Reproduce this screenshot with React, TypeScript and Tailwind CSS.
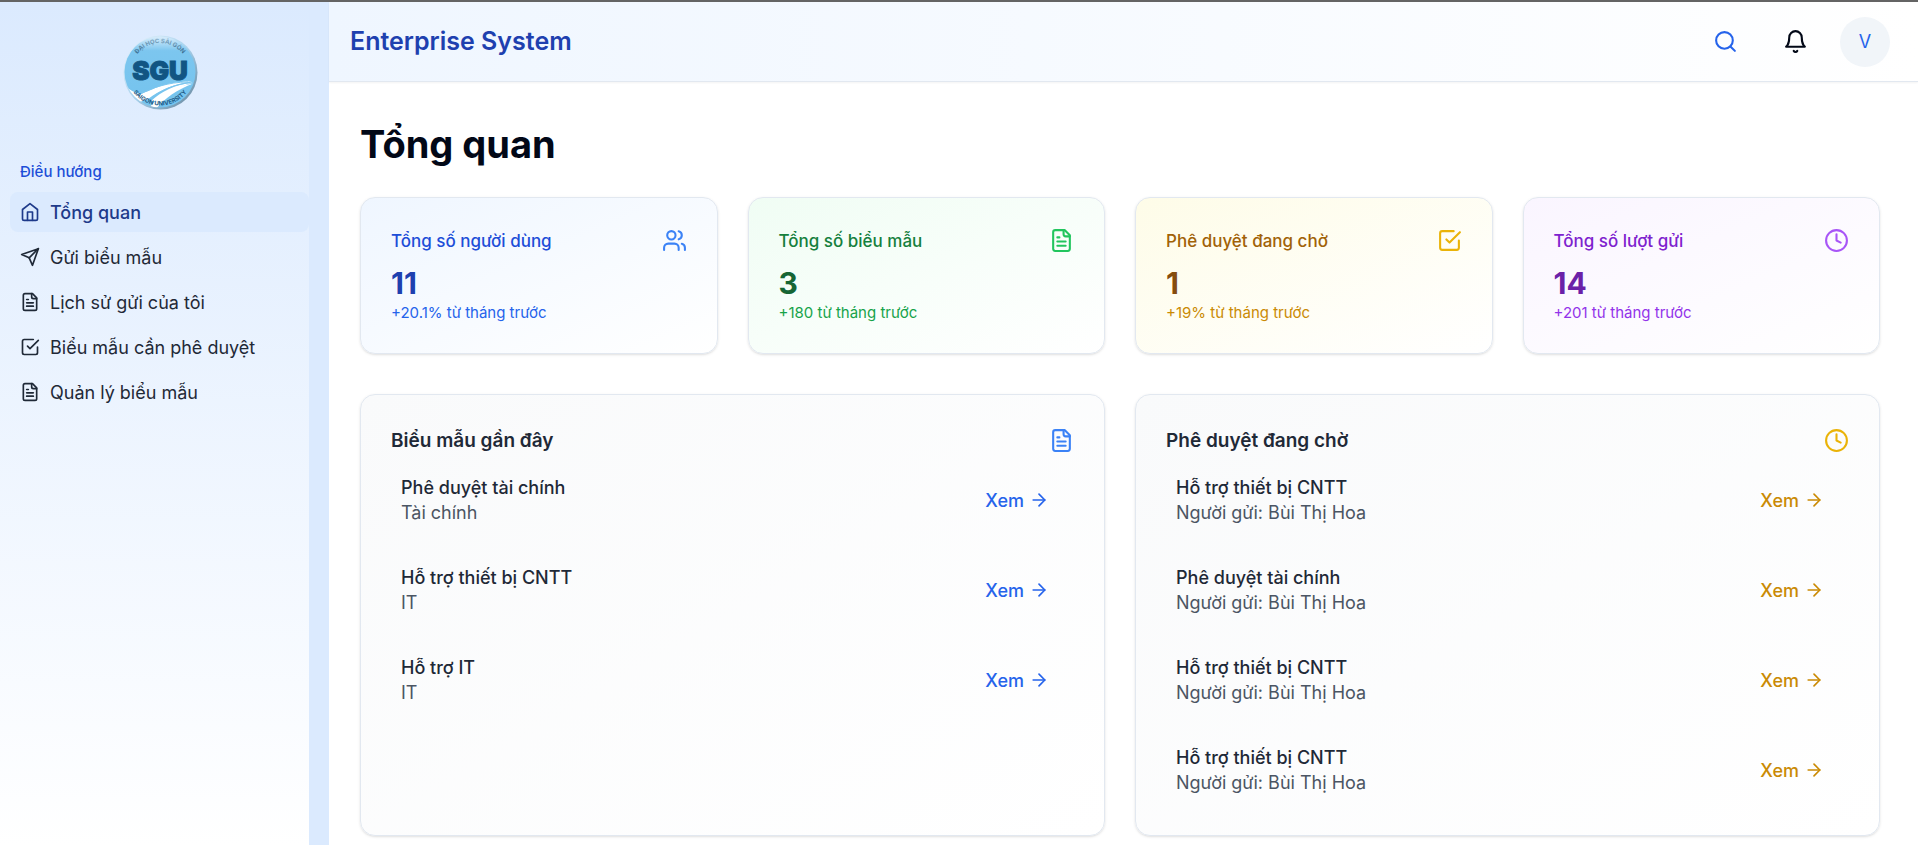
import type { ReactNode } from "react";

type IconProps = { className?: string };

function Icon({ className, children }: IconProps & { children: ReactNode }) {
  return (
    <svg
      viewBox="0 0 24 24"
      fill="none"
      stroke="currentColor"
      strokeWidth="2"
      strokeLinecap="round"
      strokeLinejoin="round"
      aria-hidden="true"
      className={`shrink-0 ${className ?? ""}`}
    >
      {children}
    </svg>
  );
}

const HomeIcon = (p: IconProps) => (
  <Icon {...p}>
    <path d="m3 9 9-7 9 7v11a2 2 0 0 1-2 2H5a2 2 0 0 1-2-2z" />
    <path d="M9 22V12h6v10" />
  </Icon>
);
const SendIcon = (p: IconProps) => (
  <Icon {...p}>
    <path d="m22 2-7 20-4-9-9-4Z" />
    <path d="M22 2 11 13" />
  </Icon>
);
const FileIcon = (p: IconProps) => (
  <Icon {...p}>
    <path d="M15 2H6a2 2 0 0 0-2 2v16a2 2 0 0 0 2 2h12a2 2 0 0 0 2-2V7Z" />
    <path d="M14 2v4a2 2 0 0 0 2 2h4" />
    <path d="M10 9H8" />
    <path d="M16 13H8" />
    <path d="M16 17H8" />
  </Icon>
);
const CheckIcon = (p: IconProps) => (
  <Icon {...p}>
    <path d="m9 11 3 3L22 4" />
    <path d="M21 12v7a2 2 0 0 1-2 2H5a2 2 0 0 1-2-2V5a2 2 0 0 1 2-2h11" />
  </Icon>
);
const UsersIcon = (p: IconProps) => (
  <Icon {...p}>
    <path d="M16 21v-2a4 4 0 0 0-4-4H6a4 4 0 0 0-4 4v2" />
    <circle cx="9" cy="7" r="4" />
    <path d="M22 21v-2a4 4 0 0 0-3-3.87" />
    <path d="M16 3.13a4 4 0 0 1 0 7.75" />
  </Icon>
);
const ClockIcon = (p: IconProps) => (
  <Icon {...p}>
    <circle cx="12" cy="12" r="10" />
    <path d="M12 6v6l4 2" />
  </Icon>
);
const SearchIcon = (p: IconProps) => (
  <Icon {...p}>
    <circle cx="11" cy="11" r="8" />
    <path d="m21 21-4.3-4.3" />
  </Icon>
);
const BellIcon = (p: IconProps) => (
  <Icon {...p}>
    <path d="M6 8a6 6 0 0 1 12 0c0 7 3 9 3 9H3s3-2 3-9" />
    <path d="M10.3 21a1.94 1.94 0 0 0 3.4 0" />
  </Icon>
);
const ArrowIcon = (p: IconProps) => (
  <Icon {...p}>
    <path d="M5 12h14" />
    <path d="m12 5 7 7-7 7" />
  </Icon>
);

function Logo() {
  return (
    <svg viewBox="0 0 80 80" role="img" aria-label="SGU" className="size-20">
      <defs>
        <linearGradient id="rim" x1="0" y1="0" x2="1" y2="1">
          <stop offset="0" stopColor="#eef6fd" />
          <stop offset="0.5" stopColor="#a9d3ee" />
          <stop offset="1" stopColor="#5f7f96" />
        </linearGradient>
        <linearGradient id="disc" x1="0" y1="0" x2="0" y2="1">
          <stop offset="0" stopColor="#d9edfb" />
          <stop offset="0.2" stopColor="#7cc6ef" />
          <stop offset="1" stopColor="#74c3ee" />
        </linearGradient>
        <linearGradient id="arcInk" x1="0" y1="0" x2="0" y2="1">
          <stop offset="0" stopColor="#8fb4cd" />
          <stop offset="1" stopColor="#2c6288" />
        </linearGradient>
        <clipPath id="discClip">
          <circle cx="40" cy="40" r="35.5" />
        </clipPath>
        <path id="arcTop" d="M11 40a29 29 0 0 1 58 0" />
        <path id="arcBottom" d="M6.5 40a33.5 33.5 0 0 0 67 0" />
      </defs>
      <circle cx="40.5" cy="40.5" r="37" fill="url(#rim)" />
      <circle cx="40" cy="40" r="35.5" fill="url(#disc)" />
      <g clipPath="url(#discClip)" fill="#ffffff">
        <path d="M2 51C8 57 14 61 21 62C32 58 46 49 72 49.5C54 52 40 58 28 67L20 70L4 60Z" />
        <path d="M31 69C42 59 54 53 73 50.5C58 55 48 61 40 69Z" />
        <path d="M28 77C40 62 56 54 73 51.5C56 58 44 67 36 77Z" />
      </g>
      <path d="M20 62C32 56 48 50 68 50M30 67C42 57 56 52 70 50.8" fill="none" stroke="#7cc6ef" strokeWidth="1" />
      <text
        x="40"
        y="48"
        textAnchor="middle"
        fill="#115583"
        stroke="#115583"
        strokeWidth="1"
        className="font-['Inter'] text-[26px] font-black"
      >
        SGU
      </text>
      <text fill="url(#arcInk)" className="font-['Inter'] text-[6px] font-bold">
        <textPath href="#arcTop" startOffset="50%" textAnchor="middle">ĐẠI HỌC SÀI GÒN</textPath>
      </text>
      <text fill="#1d5a85" className="font-['Inter'] text-[6px] font-bold">
        <textPath href="#arcBottom" startOffset="50%" textAnchor="middle">SAIGON UNIVERSITY</textPath>
      </text>
    </svg>
  );
}

const nav = [
  { label: "Tổng quan", icon: HomeIcon, active: true },
  { label: "Gửi biểu mẫu", icon: SendIcon, active: false },
  { label: "Lịch sử gửi của tôi", icon: FileIcon, active: false },
  { label: "Biểu mẫu cần phê duyệt", icon: CheckIcon, active: false },
  { label: "Quản lý biểu mẫu", icon: FileIcon, active: false },
];

const stats = [
  {
    title: "Tổng số người dùng", value: "11", note: "+20.1% từ tháng trước", icon: UsersIcon,
    bg: "from-[#eff6ff]", titleColor: "text-[#1d4ed8]", valueColor: "text-[#1e40af]", noteColor: "text-[#2563eb]", iconColor: "text-[#3b82f6]",
  },
  {
    title: "Tổng số biểu mẫu", value: "3", note: "+180 từ tháng trước", icon: FileIcon,
    bg: "from-[#f0fdf4]", titleColor: "text-[#15803d]", valueColor: "text-[#166534]", noteColor: "text-[#16a34a]", iconColor: "text-[#22c55e]",
  },
  {
    title: "Phê duyệt đang chờ", value: "1", note: "+19% từ tháng trước", icon: CheckIcon,
    bg: "from-[#fefce8]", titleColor: "text-[#a16207]", valueColor: "text-[#854d0e]", noteColor: "text-[#ca8a04]", iconColor: "text-[#eab308]",
  },
  {
    title: "Tổng số lượt gửi", value: "14", note: "+201 từ tháng trước", icon: ClockIcon,
    bg: "from-[#faf5ff]", titleColor: "text-[#7e22ce]", valueColor: "text-[#6b21a8]", noteColor: "text-[#9333ea]", iconColor: "text-[#a855f7]",
  },
];

const sender = "Người gửi: Bùi Thị Hoa";

const panels = [
  {
    title: "Biểu mẫu gần đây", icon: FileIcon, iconColor: "text-[#3b82f6]", linkColor: "text-[#2563eb]",
    rows: [
      { title: "Phê duyệt tài chính", sub: "Tài chính" },
      { title: "Hỗ trợ thiết bị CNTT", sub: "IT" },
      { title: "Hỗ trợ IT", sub: "IT" },
    ],
  },
  {
    title: "Phê duyệt đang chờ", icon: ClockIcon, iconColor: "text-[#eab308]", linkColor: "text-[#ca8a04]",
    rows: [
      { title: "Hỗ trợ thiết bị CNTT", sub: sender },
      { title: "Phê duyệt tài chính", sub: sender },
      { title: "Hỗ trợ thiết bị CNTT", sub: sender },
      { title: "Hỗ trợ thiết bị CNTT", sub: sender },
    ],
  },
];

const card = "rounded-[15px] border border-[#e2e8f0] bg-gradient-to-br to-white p-[30px] shadow-sm";

export default function App() {
  return (
    <div className="flex min-h-screen border-t-2 border-[#646464] bg-white font-['Inter',sans-serif] text-[#020817]">
      <aside className="flex w-[329px] shrink-0 bg-[#dbeafe]">
        <div className="flex flex-1 flex-col bg-gradient-to-b from-[#dbeafe] to-white pl-[10px]">
          <div className="flex justify-center pt-[30px] pb-[40px]">
            <Logo />
          </div>
          <h2 className="px-[10px] py-[8px] text-[15px] leading-[24px] font-medium text-[#1d4ed8]">Điều hướng</h2>
          <nav className="flex flex-col gap-[5px]">
            {nav.map(({ label, icon: NavIcon, active }) => (
              <a
                key={label}
                href="#"
                aria-current={active ? "page" : undefined}
                className={`flex h-10 items-center gap-[10px] rounded-lg px-[10px] text-[18px] ${
                  active ? "bg-[#dbeafe] font-medium text-[#1e3a8a]" : "text-[#1f2937]"
                }`}
              >
                <NavIcon className="size-5" />
                {label}
              </a>
            ))}
          </nav>
        </div>
        <div className="w-5" />
      </aside>

      <div className="flex min-w-0 flex-1 flex-col">
        <header className="flex h-20 items-center justify-between border-b border-[#e2e8f0] bg-gradient-to-r from-[#eff6ff] to-white pr-[28px] pl-[21px] shadow-xs">
          <span className="text-[25px] font-semibold text-[#1e40af]">Enterprise System</span>
          <div className="flex items-center gap-5">
            <button type="button" aria-label="Tìm kiếm" className="flex size-[50px] items-center justify-center text-[#2563eb]">
              <SearchIcon className="size-[25px]" />
            </button>
            <button type="button" aria-label="Thông báo" className="flex size-[50px] items-center justify-center">
              <BellIcon className="size-[25px]" />
            </button>
            <button type="button" className="flex size-[50px] items-center justify-center rounded-full bg-[#f1f5f9] text-[18px] text-[#2563eb]">
              V
            </button>
          </div>
        </header>

        <main className="flex flex-col pt-10 pr-[38px] pb-[9px] pl-[31px]">
          <h1 className="text-[38px] leading-[45px] font-bold">Tổng quan</h1>
          <section className="mt-[30px] grid grid-cols-4 gap-[30px]">
            {stats.map(({ icon: StatIcon, ...s }) => (
              <article key={s.title} className={`${card} ${s.bg}`}>
                <div className="flex h-[35px] items-start justify-between">
                  <h3 className={`text-[17px] leading-[27px] font-medium ${s.titleColor}`}>{s.title}</h3>
                  <StatIcon className={`size-[25px] ${s.iconColor}`} />
                </div>
                <p className={`text-[30px] leading-10 font-bold ${s.valueColor}`}>{s.value}</p>
                <p className={`text-[15px] leading-5 ${s.noteColor}`}>{s.note}</p>
              </article>
            ))}
          </section>
          <section className="mt-10 grid grid-cols-2 gap-[30px]">
            {panels.map(({ icon: PanelIcon, ...p }) => (
              <article key={p.title} className={`${card} from-[#f9fafb]`}>
                <div className="flex h-10 items-start justify-between">
                  <h3 className="text-[19px] leading-[32px] font-semibold text-[#1f2937]">{p.title}</h3>
                  <div className="flex h-[30px] items-center">
                    <PanelIcon className={`size-[25px] ${p.iconColor}`} />
                  </div>
                </div>
                <ul className="flex flex-col gap-5">
                  {p.rows.map((r, i) => (
                    <li key={i} className="flex items-center justify-between p-[10px] text-[18px] leading-[25px]">
                      <div>
                        <p className="font-medium text-[#1f2937]">{r.title}</p>
                        <p className="text-[#4b5563]">{r.sub}</p>
                      </div>
                      <a href="#" className={`flex items-center gap-[5px] px-[15px] font-medium ${p.linkColor}`}>
                        Xem
                        <ArrowIcon className="size-5" />
                      </a>
                    </li>
                  ))}
                </ul>
              </article>
            ))}
          </section>
        </main>
      </div>
    </div>
  );
}
